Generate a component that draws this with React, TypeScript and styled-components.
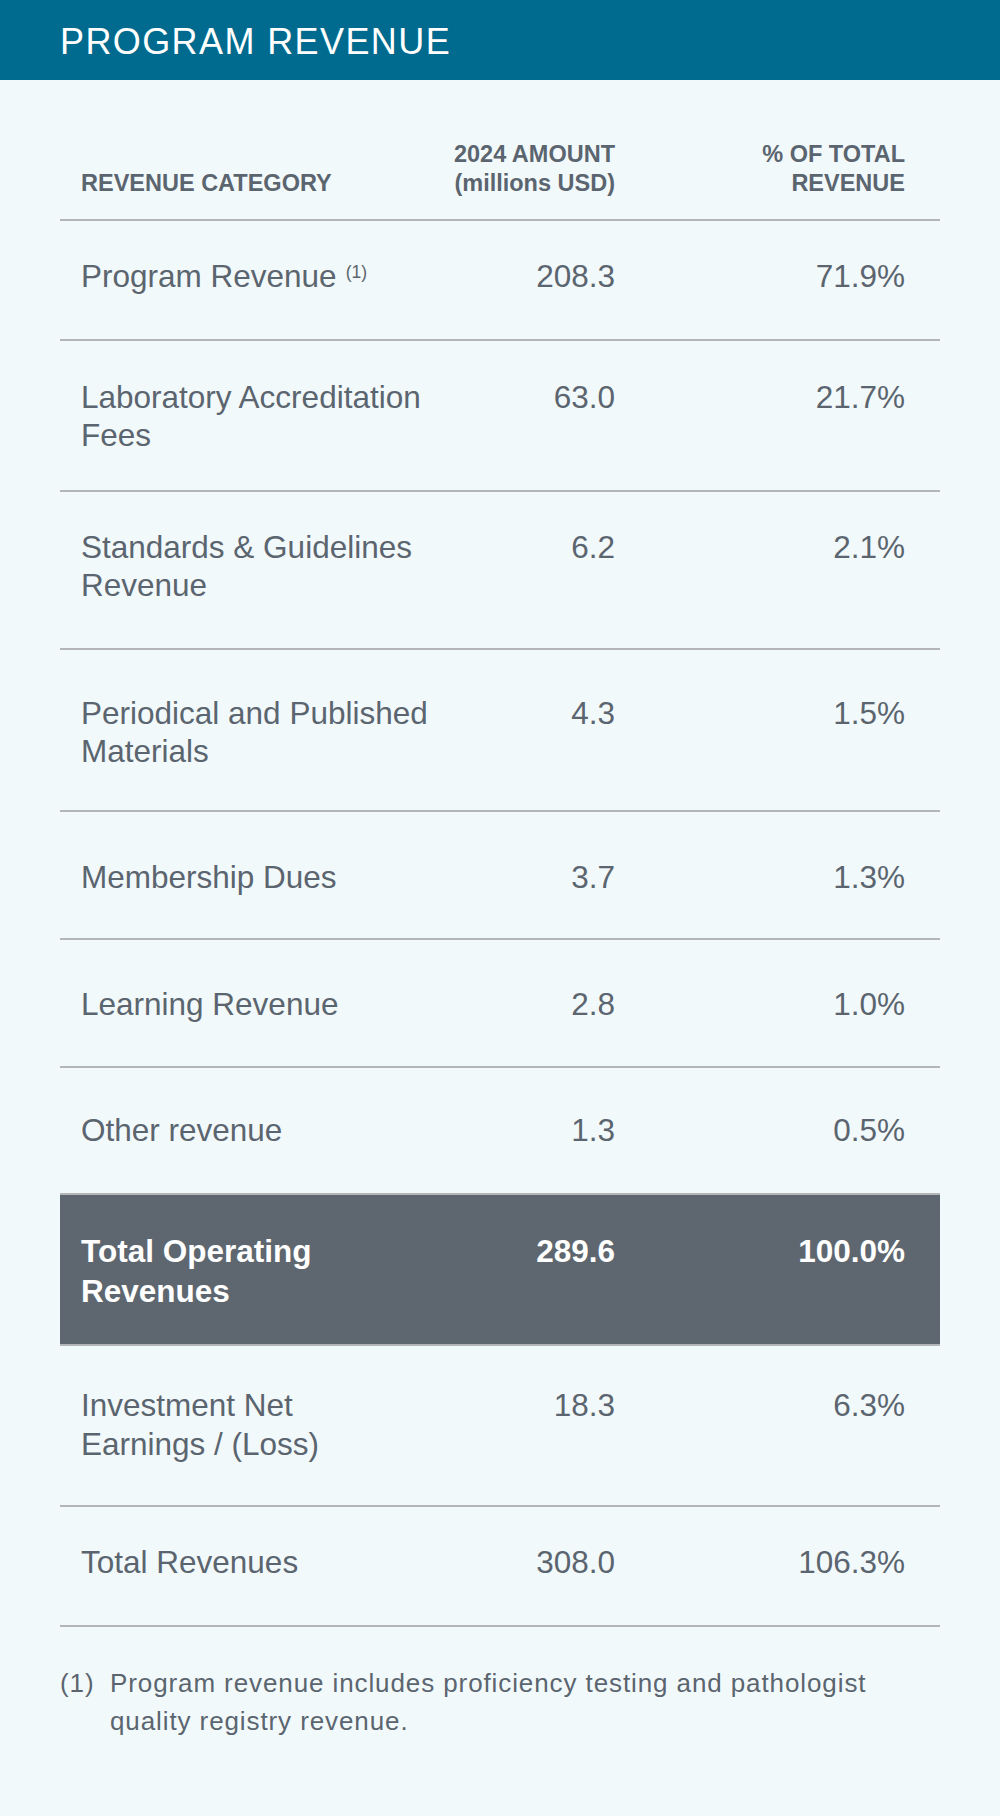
import styled, { createGlobalStyle } from "styled-components";

interface RevenueRow {
  label: string[];
  amount: string;
  share: string;
  note?: string;
  padTop: number;
  height: number;
  lineHeight?: number;
  highlight?: boolean;
}

const rows: RevenueRow[] = [
  { label: ["Program Revenue"], note: "(1)", amount: "208.3", share: "71.9%", padTop: 37, height: 120 },
  { label: ["Laboratory Accreditation", "Fees"], amount: "63.0", share: "21.7%", padTop: 38, height: 151 },
  { label: ["Standards & Guidelines", "Revenue"], amount: "6.2", share: "2.1%", padTop: 36.5, height: 158 },
  { label: ["Periodical and Published", "Materials"], amount: "4.3", share: "1.5%", padTop: 45, height: 162 },
  { label: ["Membership Dues"], amount: "3.7", share: "1.3%", padTop: 46.5, height: 128 },
  { label: ["Learning Revenue"], amount: "2.8", share: "1.0%", padTop: 46, height: 128 },
  { label: ["Other revenue"], amount: "1.3", share: "0.5%", padTop: 44, height: 127 },
  {
    label: ["Total Operating", "Revenues"],
    amount: "289.6",
    share: "100.0%",
    padTop: 35.5,
    height: 151,
    lineHeight: 40,
    highlight: true,
  },
  { label: ["Investment Net", "Earnings / (Loss)"], amount: "18.3", share: "6.3%", padTop: 39.5, height: 161, lineHeight: 39 },
  { label: ["Total Revenues"], amount: "308.0", share: "106.3%", padTop: 36.5, height: 120 },
];

const GlobalStyle = createGlobalStyle`
  html, body {
    margin: 0;
    padding: 0;
    background: #f2f9fb;
  }
  body {
    font-family: "Liberation Sans", Arial, Helvetica, sans-serif;
    color: #5b656f;
  }
  * {
    box-sizing: border-box;
  }
`;

const Page = styled.div`
  width: 1000px;
  min-height: 1816px;
  background: #f2f9fb;
`;

const Banner = styled.header`
  height: 80px;
  padding: 23.5px 60px 0;
  background: #006b8e;
`;

const Title = styled.h1`
  margin: 0;
  font-size: 36px;
  line-height: 36px;
  font-weight: 400;
  letter-spacing: 1.4px;
  color: #ffffff;
`;

const Body = styled.main`
  padding: 0 60px;
`;

const Table = styled.div`
  display: flex;
  flex-direction: column;
`;

const HeadRow = styled.div`
  display: grid;
  grid-template-columns: 1fr 200px 290px;
  align-items: end;
  padding: 60px 0 20.5px;
  border-bottom: 2px solid #b3b5b6;
`;

const HeadCell = styled.div<{ $right?: boolean }>`
  padding: ${(p) => (p.$right ? "0 35px 0 0" : "0 0 0 21px")};
  text-align: ${(p) => (p.$right ? "right" : "left")};
  font-size: 23.5px;
  line-height: 29.4px;
  font-weight: 700;
  color: #5b656f;
`;

const Row = styled.div<{ $padTop: number; $height: number; $lh: number; $highlight?: boolean }>`
  display: grid;
  grid-template-columns: 1fr 200px 290px;
  align-items: start;
  height: ${(p) => p.$height}px;
  padding-top: ${(p) => p.$padTop}px;
  border-bottom: 2px solid #b3b5b6;
  background: ${(p) => (p.$highlight ? "#5e6770" : "transparent")};
  color: ${(p) => (p.$highlight ? "#ffffff" : "#5b656f")};
  font-weight: ${(p) => (p.$highlight ? 700 : 400)};
  font-size: 31.5px;
  line-height: ${(p) => p.$lh}px;
`;

const Label = styled.div`
  padding-left: 21px;
`;

const Figure = styled.div`
  padding-right: 35px;
  text-align: right;
`;

const Note = styled.span`
  margin-left: 9px;
  font-size: 17.5px;
  vertical-align: 9px;
  line-height: 0;
`;

const Footnote = styled.p`
  display: grid;
  grid-template-columns: 50px 1fr;
  margin: 36.5px 0 0;
  font-size: 26px;
  line-height: 38.3px;
  letter-spacing: 0.9px;
  color: #5b656f;
`;

export default function App() {
  return (
    <Page>
      <GlobalStyle />
      <Banner>
        <Title>PROGRAM REVENUE</Title>
      </Banner>
      <Body>
        <Table>
          <HeadRow>
            <HeadCell>REVENUE CATEGORY</HeadCell>
            <HeadCell $right>
              2024 AMOUNT
              <br />
              (millions USD)
            </HeadCell>
            <HeadCell $right>
              % OF TOTAL
              <br />
              REVENUE
            </HeadCell>
          </HeadRow>
          {rows.map((row) => (
            <Row
              key={row.label.join(" ")}
              $padTop={row.padTop}
              $height={row.height}
              $lh={row.lineHeight ?? 37.8}
              $highlight={row.highlight}
            >
              <Label>
                {row.label.map((line, i) => (
                  <div key={line}>
                    {line}
                    {row.note && i === row.label.length - 1 && <Note>{row.note}</Note>}
                  </div>
                ))}
              </Label>
              <Figure>{row.amount}</Figure>
              <Figure>{row.share}</Figure>
            </Row>
          ))}
        </Table>
        <Footnote>
          <span>(1)</span>
          <span>
            Program revenue includes proficiency testing and pathologist quality
            registry revenue.
          </span>
        </Footnote>
      </Body>
    </Page>
  );
}
